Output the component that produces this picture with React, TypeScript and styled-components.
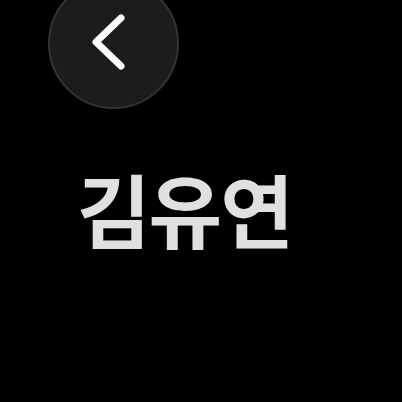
import * as React from "react";
import styled, { createGlobalStyle } from "styled-components";

const GlobalStyle = createGlobalStyle`
  html, body {
    margin: 0;
    padding: 0;
    background: #000;
  }
  #root {
    width: 402px;
    height: 402px;
    overflow: hidden;
  }
`;

export default function App() {
  return (
    <>
      <GlobalStyle />
      <Screen>
        <BackButton aria-label="back">
          <svg width="40" height="60" viewBox="0 0 40 60">
            <polyline
              points="30,7 5,31 30,55"
              fill="none"
              stroke="#fff"
              strokeWidth="7"
              strokeLinecap="round"
              strokeLinejoin="round"
            />
          </svg>
        </BackButton>
        <Name>김유연</Name>
      </Screen>
    </>
  );
}

//////////
// Style
//////////
const Screen = styled.div`
  width: 402px;
  height: 402px;
  background: #000;
  display: flex;
  flex-direction: column;
  align-items: flex-start;
`;

const BackButton = styled.button`
  width: 131px;
  height: 131px;
  margin: -22px 0 0 48px;
  padding: 0 6px 36px 0;
  border-radius: 50%;
  background: #1c1c1c;
  border: 2px solid #333;
  box-sizing: border-box;
  display: flex;
  align-items: flex-end;
  justify-content: center;
`;

const Name = styled.div`
  margin: 50px 0 0 77px;
  font-family: "Noto Sans CJK KR", sans-serif;
  font-weight: 700;
  font-size: 80px;
  line-height: 1.2;
  color: #e0e0e0;
  letter-spacing: -2px;
`;
